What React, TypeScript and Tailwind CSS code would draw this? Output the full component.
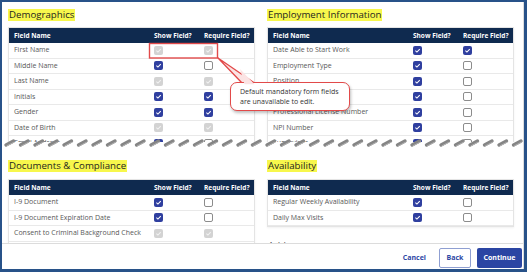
import React from 'react';

type State = 'on' | 'off' | 'dis';

interface Row {
  name: string;
  show: State;
  req: State;
}

const demographics: Row[] = [
  { name: 'First Name', show: 'dis', req: 'dis' },
  { name: 'Middle Name', show: 'on', req: 'off' },
  { name: 'Last Name', show: 'dis', req: 'dis' },
  { name: 'Initials', show: 'on', req: 'on' },
  { name: 'Gender', show: 'on', req: 'on' },
  { name: 'Date of Birth', show: 'dis', req: 'dis' },
  { name: 'Email Address', show: 'on', req: 'off' },
];

const employment: Row[] = [
  { name: 'Date Able to Start Work', show: 'on', req: 'on' },
  { name: 'Employment Type', show: 'on', req: 'off' },
  { name: 'Position', show: 'on', req: 'off' },
  { name: 'Department', show: 'on', req: 'off' },
  { name: 'Professional License Number', show: 'on', req: 'off' },
  { name: 'NPI Number', show: 'on', req: 'off' },
  { name: 'Supervisor', show: 'on', req: 'off' },
];

const documents: Row[] = [
  { name: 'I-9 Document', show: 'on', req: 'off' },
  { name: 'I-9 Document Expiration Date', show: 'on', req: 'off' },
  { name: 'Consent to Criminal Background Check', show: 'dis', req: 'dis' },
  { name: 'Background Check Date', show: 'on', req: 'off' },
];

const availability: Row[] = [
  { name: 'Regular Weekly Availability', show: 'on', req: 'off' },
  { name: 'Daily Max Visits', show: 'on', req: 'off' },
];

const Box: React.FC<{ s: State }> = ({ s }) => {
  if (s === 'off') {
    return <div className="w-[9px] h-[9px] rounded-[2px] border border-[#8c8c8c] bg-white" />;
  }
  return (
    <div
      className={`w-[9px] h-[9px] rounded-[2px] flex items-center justify-center ${
        s === 'on' ? 'bg-[#2f3f9f]' : 'bg-[#d3d3d3]'
      }`}
    >
      <svg viewBox="0 0 10 10" className="w-[7px] h-[7px]">
        <path d="M2 5.2 L4.2 7.3 L8.2 3" fill="none" stroke={s === 'on' ? '#ffffff' : '#f2f2f2'} strokeWidth="1.5" />
      </svg>
    </div>
  );
};

const Title: React.FC<{ children: React.ReactNode }> = ({ children }) => (
  <div className="h-[12px] flex items-center">
    <span className="bg-[#f7f74c] text-[9.7px] leading-[12px] text-[#1e1e1e] px-[1px]">{children}</span>
  </div>
);

const FieldTable: React.FC<{ rows: Row[] }> = ({ rows }) => (
  <div className="border border-[#e4e4e4] bg-white shadow-[0_1px_2px_rgba(0,0,0,0.06)]">
    <div className="grid grid-cols-[145px_50px_1fr] h-[15px] items-center bg-[#0f2a4f] text-white text-[6.5px] font-bold">
      <div className="pl-[5px]">Field Name</div>
      <div>Show Field?</div>
      <div>Require Field?</div>
    </div>
    {rows.map((r) => (
      <div
        key={r.name}
        className="grid grid-cols-[145px_50px_1fr] h-[15.5px] items-center border-b border-[#e9e9e9] text-[7px] text-[#585858]"
      >
        <div className="pl-[5px] whitespace-nowrap">{r.name}</div>
        <div>
          <Box s={r.show} />
        </div>
        <div>
          <Box s={r.req} />
        </div>
      </div>
    ))}
  </div>
);

const TornEdge: React.FC = () => (
  <svg className="absolute left-[2px] top-[138px]" width="522" height="10" viewBox="0 0 522 10">
    {Array.from({ length: 37 }).map((_, i) => {
      const x = 4 + i * 14.5;
      return (
        <g key={i}>
          <path d={`M${x} 7 L${x + 7.5} 3`} stroke="#858585" strokeWidth="3.4" strokeLinecap="round" />
          <path d={`M${x + 1} 7.8 L${x + 8} 4.2`} stroke="#b0b0b0" strokeWidth="1" strokeLinecap="round" />
        </g>
      );
    })}
  </svg>
);

export default function App() {
  return (
    <div
      className="relative w-[527px] h-[272px] bg-[#285289] pl-[2px] pt-[2px] pr-[3px] pb-[3px]"
      style={{ fontFamily: '"Open Sans", "Liberation Sans", sans-serif' }}
    >
      <div className="w-full h-full bg-white flex flex-col border-r border-[#dcdcdc]">
        <div className="h-[140px] overflow-hidden grid grid-cols-[247px_247px] gap-x-[12px] pl-[6px] pt-[7px]">
          <div className="flex flex-col gap-[6px]">
            <Title>Demographics</Title>
            <FieldTable rows={demographics} />
          </div>
          <div className="flex flex-col gap-[6px]">
            <Title>Employment Information</Title>
            <FieldTable rows={employment} />
          </div>
        </div>

        <div className="h-[101px] overflow-hidden grid grid-cols-[247px_247px] gap-x-[12px] pl-[6px] pt-[18px]">
          <div className="flex flex-col gap-[7px]">
            <Title>Documents &amp; Compliance</Title>
            <FieldTable rows={documents} />
          </div>
          <div className="flex flex-col gap-[7px]">
            <Title>Availability</Title>
            <FieldTable rows={availability} />
            <div className="mt-[6px] pl-[1px] text-[9.7px] leading-[12px] text-[#555]">Address</div>
          </div>
        </div>

        <div className="flex-1 border-t border-[#dcdcdc] flex justify-end items-start pt-[4px] pr-[1px] text-[7px] font-bold">
          <button className="h-[20px] px-[4px] mr-[9px] text-[#2d47a4]">Cancel</button>
          <button className="h-[20px] w-[32px] mr-[6px] rounded-[2px] border border-[#8f9fd2] bg-white text-[#2d47a4]">
            Back
          </button>
          <button className="h-[20px] w-[45px] rounded-[2px] bg-[#2b45a3] text-white">Continue</button>
        </div>
      </div>

      <TornEdge />

      <svg className="absolute left-0 top-0" width="527" height="272" viewBox="0 0 527 272">
        <rect x="149.5" y="43.5" width="68" height="14.5" fill="none" stroke="#e24a4a" strokeWidth="1.4" />
        <polygon points="218,58 243,84 256,84" fill="#fbe3e3" stroke="#e24a4a" strokeWidth="1.3" />
      </svg>

      <div className="absolute left-[230px] top-[82px] w-[120px] h-[29px] rounded-[7px] border-[1.5px] border-[#e24a4a] bg-white shadow-[1px_2px_3px_rgba(0,0,0,0.25)] pl-[9px] pt-[4px] text-[7px] leading-[10px] text-[#333]">
        <div>Default mandatory form fields</div>
        <div>are unavailable to edit.</div>
      </div>
      <svg className="absolute left-0 top-0 pointer-events-none" width="527" height="272" viewBox="0 0 527 272">
        <polygon points="244.5,84.2 254.5,84.2 240,69" fill="#fbe3e3" />
      </svg>
    </div>
  );
}
